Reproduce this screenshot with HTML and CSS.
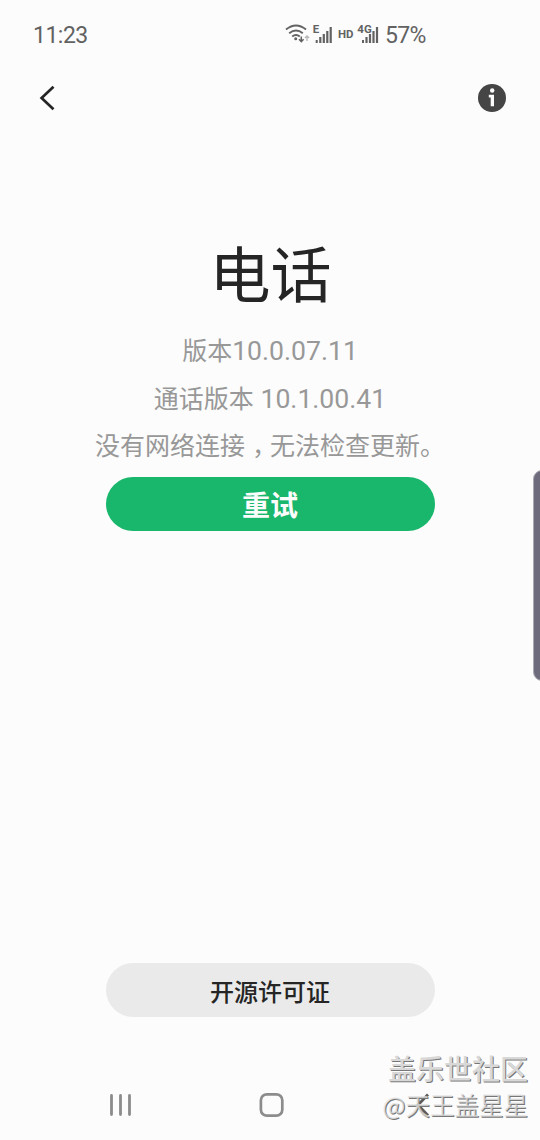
FILE: index.html
```html
<!DOCTYPE html>
<html lang="zh-CN">
<head>
<meta charset="utf-8">
<title>电话</title>
<link rel="stylesheet" href="styles.css">
</head>
<body>
<div class="screen">
  <header class="status">
    <span class="time">11:23</span>
    <div class="indicators">
      <svg class="signals" width="96" height="24" viewBox="284 22 96 24">
        <g fill="none" stroke="#626262" stroke-width="1.9">
          <path d="M286 29.5Q296 21.5 306 29.5M289.2 33.2Q296 27.8 302.8 33.2M292.2 36.4Q296 33.4 299.8 36.4"/>
          <path d="M301.3 36.5V41M299 39.3l2.3 2.3 2.3-2.3" stroke-width="1.5"/>
          <path d="M307 41V36M304.9 38l2.1-2.1 2.1 2.1" stroke="#b5b5b5" stroke-width="1.3"/>
        </g>
        <circle cx="295.7" cy="38.8" r="1.5" fill="#626262"/>
        <path fill="#626262" d="M315.7 40h2v3h-2zM319.2 37h2.2v6h-2.2zM322.7 34h2.2v9h-2.2zM326.2 31h2.2v12h-2.2zM329.6 27h2.2v16h-2.2zM362 40h2v3h-2zM365.4 37h2.2v6h-2.2zM368.9 34h2.2v9h-2.2zM372.4 31h2.2v12h-2.2zM375.9 27h2.2v16h-2.2z"/>
        <g fill="#626262" class="labels">
          <text x="312.8" y="33">E</text>
          <text x="338" y="37.5" textLength="15.5" lengthAdjust="spacingAndGlyphs">HD</text>
          <text x="357.3" y="33.3">4G</text>
        </g>
      </svg>
      <span class="battery">57%</span>
    </div>
  </header>
  <nav class="toolbar">
    <svg width="20" height="28" viewBox="0 0 20 28"><path d="M15.5 2.8 3.6 14l11.9 11.2" fill="none" stroke="#252525" stroke-width="2.7"/></svg>
    <svg width="28" height="28" viewBox="0 0 28 28"><circle cx="14" cy="14" r="14" fill="#454545"/><circle cx="14.2" cy="6.5" r="2.2" fill="#fcfcfc"/><path d="M10.8 10.8h5.2v11.5h-3.3v-8.8h-1.9z" fill="#fcfcfc"/></svg>
  </nav>
  <main class="about">
    <h1>电话</h1>
    <p>版本<span class="num">10.0.07.11</span></p>
    <p>通话版本<span class="num"> 10.1.00.41</span></p>
    <p>没有网络连接<span class="comma">，</span>无法检查更新。</p>
    <button class="pill retry">重试</button>
  </main>
  <button class="pill license">开源许可证</button>
  <footer class="navbar">
    <svg width="24" height="26" viewBox="0 0 24 26"><path d="M3.5 3.5v19M12.5 3.5v19M21.5 3.5v19" stroke="#8c8c8c" stroke-width="2.8" stroke-linecap="round"/></svg>
    <svg width="26" height="26" viewBox="0 0 26 26"><rect x="1.9" y="2.3" width="21.4" height="21.4" rx="6" fill="none" stroke="#8c8c8c" stroke-width="2.7"/></svg>
    <svg width="20" height="26" viewBox="0 0 20 26"><path d="M16 2.5 6 13l10 10.5" fill="none" stroke="#5c5c5c" stroke-width="2.8"/></svg>
  </footer>
  <div class="edge-handle"></div>
  <div class="watermark">
    <div class="community">盖乐世社区</div>
    <div class="author">@天王盖星星</div>
  </div>
</div>
</body>
</html>
```
FILE: styles.css
```css
* { box-sizing: border-box; }
body { margin: 0; background: #fcfcfc; }
.screen {
  position: relative;
  width: 540px;
  height: 1140px;
  overflow: hidden;
  display: flex;
  flex-direction: column;
  align-items: center;
  background: #fcfcfc;
  color: #252525;
  font-family: Roboto, "Noto Sans CJK SC", sans-serif;
}
svg { display: block; flex: none; }
.status {
  width: 100%;
  height: 70px;
  padding: 0 114px 0 33px;
  display: flex;
  justify-content: space-between;
  align-items: center;
  color: #626262;
  font-size: 23px;
}
.time { letter-spacing: -0.5px; }
.indicators { display: flex; align-items: center; gap: 5px; }
.signals { margin-top: -2px; }
.battery { white-space: nowrap; letter-spacing: -0.7px; width: 41px; }
.labels { font: 700 11.5px Roboto, sans-serif; }
.toolbar {
  width: 100%;
  height: 56px;
  padding: 0 34px 0 38px;
  display: flex;
  justify-content: space-between;
  align-items: center;
}
.about {
  width: 100%;
  padding-top: 106px;
  display: flex;
  flex-direction: column;
  align-items: center;
}
h1 {
  margin: 0 0 4px;
  padding-left: 1px;
  font-size: 61px;
  line-height: 90px;
  font-weight: 400;
}
p {
  margin: 0;
  height: 47.5px;
  line-height: 47.5px;
  font-size: 25px;
  font-weight: 400;
  color: #989898;
  white-space: pre;
  font-family: "Noto Sans CJK SC", sans-serif;
}
.num { font: 400 26.6px Roboto, sans-serif; }
.comma {
  display: inline-block;
  width: 25px;
  padding-left: 7px;
  font-feature-settings: "halt";
}
.pill {
  border: 0;
  padding: 0;
  width: 329px;
  height: 54px;
  border-radius: 27px;
  font-family: "Noto Sans CJK SC", sans-serif;
}
.retry { margin-top: 8px; background: #18b76c; color: #fcfcfc; font-size: 28px; font-weight: 700; }
.license { margin-top: 432.5px; background: #eaeaea; color: #252525; font-size: 24px; font-weight: 500; }
.navbar {
  width: 100%;
  padding: 74.5px 108px 0;
  display: flex;
  justify-content: space-between;
}
.edge-handle {
  position: absolute;
  left: 532.5px;
  top: 470px;
  width: 20px;
  height: 211px;
  border-radius: 9px;
  border: 1px solid #aaa9b1;
  background: #6e6c7c;
}
.watermark {
  position: absolute;
  right: 12px;
  top: 1049px;
  text-align: right;
  color: #d8d8d8;
  text-shadow: 1px 1px 0 #777;
  font-family: "Noto Sans CJK SC", sans-serif;
  white-space: nowrap;
}
.community { font-size: 28px; line-height: 38px; font-weight: 500; }
.author { font-size: 24.5px; line-height: 36px; color: rgba(225, 225, 225, .75); }
```
